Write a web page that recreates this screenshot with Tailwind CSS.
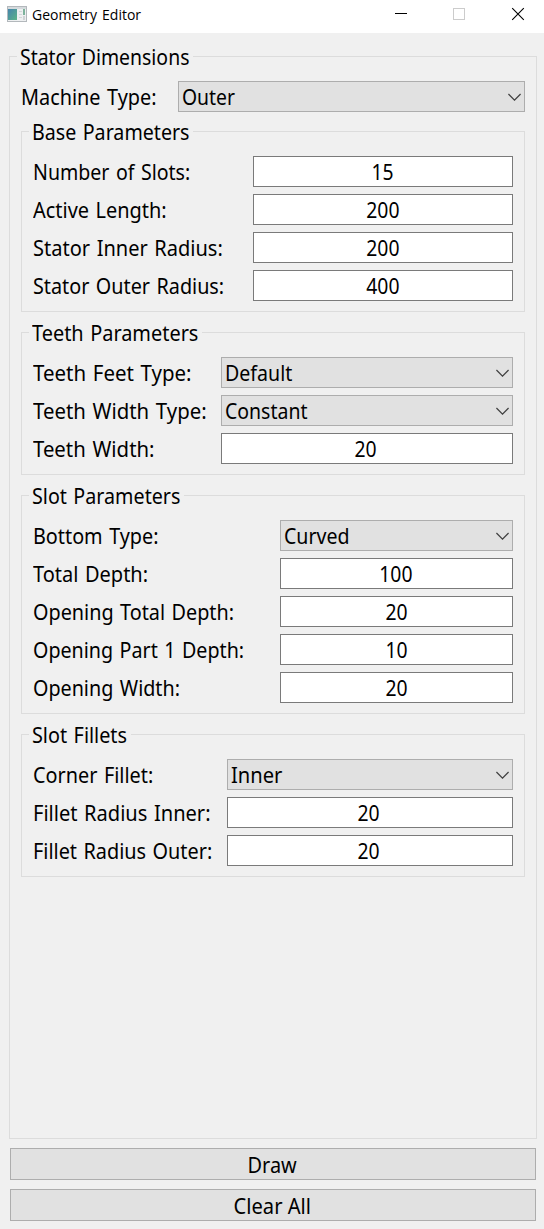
<!DOCTYPE html>
<html lang="en">
<head>
<meta charset="utf-8">
<title>Geometry Editor</title>
<script src="https://cdn.jsdelivr.net/npm/@tailwindcss/browser@4"></script>
</head>
<body class="w-[544px] h-[1229px] flex flex-col bg-[#f0f0f0] text-black overflow-hidden text-[22px] leading-[30px] [word-spacing:1.5px] whitespace-nowrap font-['Noto_Sans',sans-serif]">
<svg class="hidden"><symbol id="chev" viewBox="0 0 13 8"><path d="M.4 1 L6.5 7.1 L12.6 1" fill="none" stroke="#404040" stroke-width="1.3"/></symbol></svg>
<header class="h-[33px] shrink-0 bg-white flex items-start">
  <svg class="ml-[7px] mt-[6px] w-5 h-4 shrink-0" viewBox="0 0 20 16">
    <defs><linearGradient id="g" x1="0" y1="0" x2="1" y2="1"><stop offset="0" stop-color="#4584ac"/><stop offset="1" stop-color="#5bb487"/></linearGradient></defs>
    <rect x=".5" y=".5" width="19" height="15" fill="#eef0f1" stroke="#b3b8bc"/>
    <rect x="1" y="1" width="18" height="2" fill="#d5dadd"/>
    <rect x="1" y="3" width="9" height="11" fill="url(#g)"/>
    <path d="M12 5.5h3M12 8.5h3M12 11.5h3" stroke="#d3d7da"/>
    <rect x="16" y="3" width="2" height="6" fill="#7db39c"/>
    <rect x="16" y="10" width="2" height="4" fill="#d0d4d6"/>
  </svg>
  <span class="ml-[5px] w-[112px] text-[14.5px] leading-[28px]"><span class="inline-block origin-left scale-x-[.965] font-['Open_Sans',sans-serif]">Geometry Editor</span></span>
  <svg class="ml-auto mr-[19px] mt-[7px] w-[130px] h-[14px]" viewBox="0 0 130 14" fill="none">
    <path d="M0 6.5h12" stroke="#000"/>
    <rect x="58.5" y="1.5" width="11" height="11" stroke="#ccc"/>
    <path d="M117.2 1.2l11.6 11.6M128.8 1.2l-11.6 11.6" stroke="#000" stroke-width="1.1"/>
  </svg>
</header>
<main class="mt-[23px] ml-[9px] w-[528px] h-[1083px] shrink-0 border border-[#dcdcdc] px-[11px] flex flex-col">
  <h1 class="-mt-4 -ml-[4px] pl-[3px] h-[30px] w-[176px] bg-[#f0f0f0]"><span class="inline-block origin-left scale-x-[.883]">Stator Dimensions</span></h1>
  <div class="mt-[10px] h-[31px] flex">
    <span class="w-[157px]"><span class="inline-block origin-left scale-x-[.902]">Machine Type:</span></span>
    <div class="flex-1 h-full border border-[#adadad] bg-[#e1e1e1] pl-[3px] pr-[3px] flex items-start justify-between leading-[28px]"><span class="inline-block origin-left scale-x-[.88]">Outer</span><svg class="mt-[11px] w-[13px] h-2"><use href="#chev"/></svg></div>
  </div>

  <section class="mt-[19px] h-[181px] border border-[#dcdcdc] px-[11px]">
    <h2 class="-mt-4 -ml-[4px] pl-[3px] h-[30px] w-[164px] bg-[#f0f0f0]"><span class="inline-block origin-left scale-x-[.893]">Base Parameters</span></h2>
    <div class="mt-[10px] grid grid-cols-[220px_1fr] auto-rows-[31px] gap-y-[7px]">
      <span><span class="inline-block origin-left scale-x-[.89]">Number of Slots:</span></span><div class="border border-[#7a7a7a] bg-white text-center leading-[28px] pr-px"><span class="inline-block scale-x-[.88]">15</span></div>
      <span><span class="inline-block origin-left scale-x-[.906]">Active Length:</span></span><div class="border border-[#7a7a7a] bg-white text-center leading-[28px] pr-px"><span class="inline-block scale-x-[.88]">200</span></div>
      <span><span class="inline-block origin-left scale-x-[.91]">Stator Inner Radius:</span></span><div class="border border-[#7a7a7a] bg-white text-center leading-[28px] pr-px"><span class="inline-block scale-x-[.88]">200</span></div>
      <span><span class="inline-block origin-left scale-x-[.899]">Stator Outer Radius:</span></span><div class="border border-[#7a7a7a] bg-white text-center leading-[28px] pr-px"><span class="inline-block scale-x-[.88]">400</span></div>
    </div>
  </section>

  <section class="mt-5 h-[143px] border border-[#dcdcdc] px-[11px]">
    <h2 class="-mt-4 -ml-[4px] pl-[3px] h-[30px] w-[173px] bg-[#f0f0f0]"><span class="inline-block origin-left scale-x-[.905]">Teeth Parameters</span></h2>
    <div class="mt-[10px] grid grid-cols-[188px_1fr] auto-rows-[31px] gap-y-[7px]">
      <span><span class="inline-block origin-left scale-x-[.93]">Teeth Feet Type:</span></span><div class="border border-[#adadad] bg-[#e1e1e1] pl-[3px] pr-[3px] flex items-start justify-between leading-[28px]"><span class="inline-block origin-left scale-x-[.89]">Default</span><svg class="mt-[11px] w-[13px] h-2"><use href="#chev"/></svg></div>
      <span><span class="inline-block origin-left scale-x-[.926]">Teeth Width Type:</span></span><div class="border border-[#adadad] bg-[#e1e1e1] pl-[3px] pr-[3px] flex items-start justify-between leading-[28px]"><span class="inline-block origin-left scale-x-[.885]">Constant</span><svg class="mt-[11px] w-[13px] h-2"><use href="#chev"/></svg></div>
      <span><span class="inline-block origin-left scale-x-[.925]">Teeth Width:</span></span><div class="border border-[#7a7a7a] bg-white text-center leading-[28px] pr-[2px]"><span class="inline-block scale-x-[.88]">20</span></div>
    </div>
  </section>

  <section class="mt-5 h-[219px] border border-[#dcdcdc] px-[11px]">
    <h2 class="-mt-4 -ml-[4px] pl-[3px] h-[30px] w-[155px] bg-[#f0f0f0]"><span class="inline-block origin-left scale-x-[.895]">Slot Parameters</span></h2>
    <div class="mt-[10px] grid grid-cols-[247px_1fr] auto-rows-[31px] gap-y-[7px]">
      <span><span class="inline-block origin-left scale-x-[.9]">Bottom Type:</span></span><div class="border border-[#adadad] bg-[#e1e1e1] pl-[3px] pr-[3px] flex items-start justify-between leading-[28px]"><span class="inline-block origin-left scale-x-[.89]">Curved</span><svg class="mt-[11px] w-[13px] h-2"><use href="#chev"/></svg></div>
      <span><span class="inline-block origin-left scale-x-[.909]">Total Depth:</span></span><div class="border border-[#7a7a7a] bg-white text-center leading-[28px] pr-px"><span class="inline-block scale-x-[.88]">100</span></div>
      <span><span class="inline-block origin-left scale-x-[.9]">Opening Total Depth:</span></span><div class="border border-[#7a7a7a] bg-white text-center leading-[28px]"><span class="inline-block scale-x-[.88]">20</span></div>
      <span><span class="inline-block origin-left scale-x-[.895]">Opening Part 1 Depth:</span></span><div class="border border-[#7a7a7a] bg-white text-center leading-[28px]"><span class="inline-block scale-x-[.88]">10</span></div>
      <span><span class="inline-block origin-left scale-x-[.897]">Opening Width:</span></span><div class="border border-[#7a7a7a] bg-white text-center leading-[28px]"><span class="inline-block scale-x-[.88]">20</span></div>
    </div>
  </section>

  <section class="mt-5 h-[143px] border border-[#dcdcdc] px-[11px]">
    <h2 class="-mt-4 -ml-[4px] pl-[3px] h-[30px] w-[102px] bg-[#f0f0f0]"><span class="inline-block origin-left scale-x-[.9]">Slot Fillets</span></h2>
    <div class="mt-[10px] grid grid-cols-[194px_1fr] auto-rows-[31px] gap-y-[7px]">
      <span><span class="inline-block origin-left scale-x-[.902]">Corner Fillet:</span></span><div class="border border-[#adadad] bg-[#e1e1e1] pl-[3px] pr-[3px] flex items-start justify-between leading-[28px]"><span class="inline-block origin-left scale-x-[.915]">Inner</span><svg class="mt-[11px] w-[13px] h-2"><use href="#chev"/></svg></div>
      <span><span class="inline-block origin-left scale-x-[.912]">Fillet Radius Inner:</span></span><div class="border border-[#7a7a7a] bg-white text-center leading-[28px] pr-[2px]"><span class="inline-block scale-x-[.88]">20</span></div>
      <span><span class="inline-block origin-left scale-x-[.902]">Fillet Radius Outer:</span></span><div class="border border-[#7a7a7a] bg-white text-center leading-[28px] pr-[2px]"><span class="inline-block scale-x-[.88]">20</span></div>
    </div>
  </section>
</main>
<footer class="mt-[9px] ml-[10px] w-[526px] flex flex-col gap-[9px]">
  <button class="h-8 border border-[#adadad] bg-[#e1e1e1] pr-[2px]"><span class="inline-block scale-x-[.905]">Draw</span></button>
  <button class="h-8 border border-[#adadad] bg-[#e1e1e1] pr-px"><span class="inline-block scale-x-[.915]">Clear All</span></button>
</footer>
</body>
</html>
